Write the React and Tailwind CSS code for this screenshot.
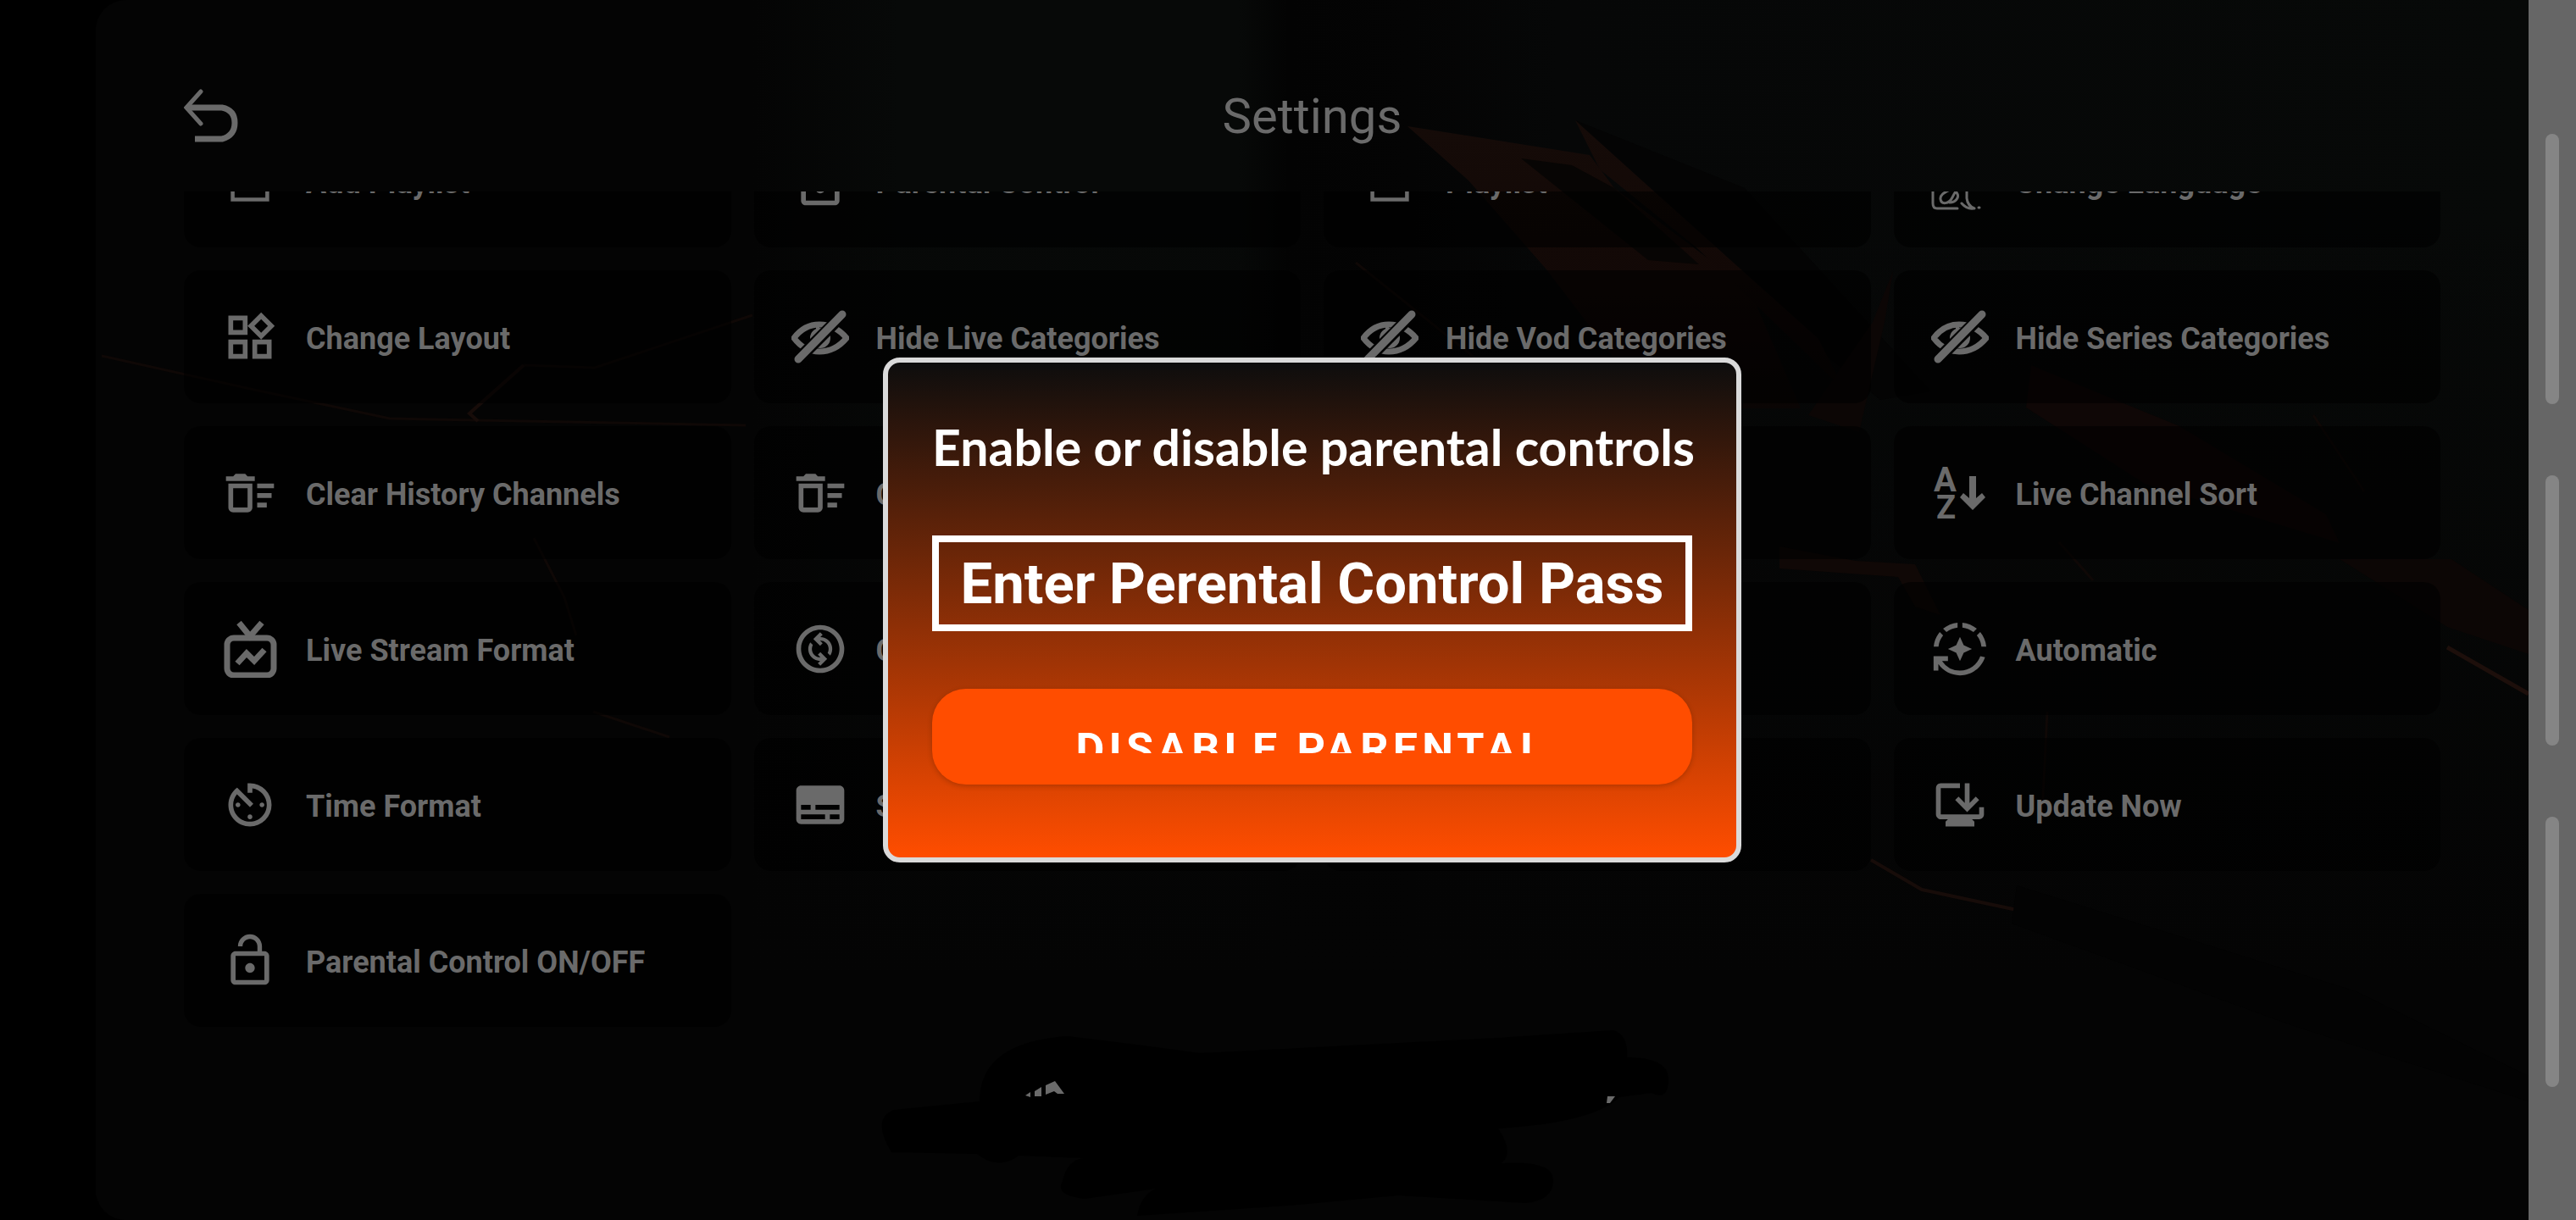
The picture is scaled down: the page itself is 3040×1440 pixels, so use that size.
import React from 'react';
import {
  MdOutlineWidgets,
  MdOutlineDeleteSweep,
  MdOutlineChangeCircle,
  MdSubtitles,
  MdAvTimer,
  MdLockOpen,
  MdLockOutline,
  MdAutoMode,
  MdOutlineBrowserUpdated,
} from 'react-icons/md';

const PlaylistIcon = () => (
  <svg viewBox="0 0 24 24" className="size-full" fill="none" stroke="currentColor" strokeWidth="1.6">
    <path d="M4.8 4.8h14.4v14.8H4.8z" />
    <path d="M12 8v8M8 12h8" />
  </svg>
);

const LanguageIcon = () => (
  <svg viewBox="0 0 68 68" className="size-full" fill="none" stroke="currentColor" strokeWidth="3" strokeLinecap="round">
    <path d="M2 8v52q0 6 5 6h24M42 34v20q1 9 9 12M36 60q6 7 14 6M56 65h1" />
    <path d="M29 40C20 46 10 48 11 55s10 6 14-2 4-8 6-4-2 10-9 10" />
  </svg>
);

const EyeOffIcon = () => (
  <svg viewBox="0 0 68 68" className="size-full" fill="none" stroke="currentColor">
    <path d="M3 35C12 23 22 19 33 19s22 4 32 16C55 47 44 51 33 51S12 47 3 35z" strokeWidth="7" />
    <circle cx="34" cy="35" r="9" strokeWidth="6" />
    <path d="M31 22v9" strokeWidth="4" />
    <path d="M8 60L61 7" stroke="#020202" strokeWidth="14" />
    <path d="M8 60L60 7" strokeWidth="9" strokeLinecap="round" />
  </svg>
);

const TvIcon = () => (
  <svg viewBox="0 0 68 68" className="size-full" fill="none" stroke="currentColor" strokeWidth="7">
    <rect x="7" y="21" width="55" height="44" rx="8" />
    <path d="M21 3l13 16L48 3" />
    <path d="M19 51l11-12 9 9 12-13" />
  </svg>
);

const SortIcon = () => (
  <svg viewBox="0 0 68 68" className="size-full" fill="currentColor" fontFamily="Roboto, sans-serif" fontWeight="700">
    <text x="3" y="32" fontSize="40">A</text>
    <text x="6" y="64" fontSize="38">Z</text>
    <path d="M45 14h8v26l7-6 4 5-15 15-15-15 4-5 7 6z" />
  </svg>
);

const menuItems = [
  { icon: PlaylistIcon, label: 'Add Playlist' },
  { icon: MdLockOutline, label: 'Parental Control' },
  { icon: PlaylistIcon, label: 'Playlist' },
  { icon: LanguageIcon, label: 'Change Language' },
  { icon: MdOutlineWidgets, label: 'Change Layout' },
  { icon: EyeOffIcon, label: 'Hide Live Categories' },
  { icon: EyeOffIcon, label: 'Hide Vod Categories' },
  { icon: EyeOffIcon, label: 'Hide Series Categories' },
  { icon: MdOutlineDeleteSweep, label: 'Clear History Channels' },
  { icon: MdOutlineDeleteSweep, label: 'Clear History Movies' },
  { icon: MdOutlineDeleteSweep, label: 'Clear History Series' },
  { icon: SortIcon, label: 'Live Channel Sort' },
  { icon: TvIcon, label: 'Live Stream Format' },
  { icon: MdOutlineChangeCircle, label: 'Change Player' },
  { icon: MdOutlineChangeCircle, label: 'Player Type' },
  { icon: MdAutoMode, label: 'Automatic' },
  { icon: MdAvTimer, label: 'Time Format' },
  { icon: MdSubtitles, label: 'Subtitle Size' },
  { icon: MdSubtitles, label: 'User Account' },
  { icon: MdOutlineBrowserUpdated, label: 'Update Now' },
  { icon: MdLockOpen, label: 'Parental Control ON/OFF' },
];

// Faint cracked-rock wallpaper behind the settings grid
const Wallpaper = () => (
  <svg className="absolute inset-0 size-full" viewBox="113 0 2871 1440" preserveAspectRatio="none" aria-hidden="true">
    <defs>
      <linearGradient id="base" x1="0" y1="0" x2="1" y2="0">
        <stop offset="0" stopColor="#040404" />
        <stop offset="0.27" stopColor="#040404" />
        <stop offset="0.33" stopColor="#070908" />
        <stop offset="0.47" stopColor="#070908" />
        <stop offset="0.49" stopColor="#030303" />
        <stop offset="0.54" stopColor="#040404" />
        <stop offset="0.6" stopColor="#060707" />
        <stop offset="1" stopColor="#070908" />
      </linearGradient>
      <linearGradient id="floor" x1="0" y1="0" x2="0" y2="1">
        <stop offset="0.15" stopColor="#040404" stopOpacity="0" />
        <stop offset="0.8" stopColor="#040404" />
      </linearGradient>
      <linearGradient id="shard" x1="0" y1="0" x2="0" y2="1">
        <stop offset="0" stopColor="#150b08" />
        <stop offset="0.6" stopColor="#120806" />
        <stop offset="1" stopColor="#0a0504" />
      </linearGradient>
    </defs>
    <rect x="113" width="2871" height="1440" fill="url(#base)" />
    <rect x="113" width="2871" height="1440" fill="url(#floor)" />
    <path d="M1859 142l200 80 220 240-60 10-220-180z" fill="#040404" />
    <path d="M1661 149l215 34 29 39 160 120 60 140H1950L1825 318l-92-105z" fill="url(#shard)" />
    <path d="M1795 187l60 8 50 27 100 90-60-5z" fill="#070504" />
    <path d="M1859 142l92 83 195 175 30 60-173-167-115-93z" fill="url(#shard)" />
    <path d="M2397 431l-6 50 140 90 230 70-16-34-173-104z" fill="#0f0706" />
    <path d="M2210 380l24-60-10 60-30 130-60-20z" fill="#0c0605" />
    <path d="M2100 645l90 17 70 4 30 60-30-10-20-35-140-10z" fill="#100806" />
    <path d="M2761 660h132l91 60v52l-96-32z" fill="#0c0605" />
    <path d="M2888 764l96 55" stroke="#1d0f0b" strokeWidth="5" />
    <g fill="none" stroke="#0f0806" strokeWidth="3">
      <path d="M888 372L702 434l-84-3" />
      <path d="M120 420l180 40 160 34 420 8" />
      <path d="M630 635l36 70 14 45M700 840l90 30" />
      <path d="M2410 960l6-120M2430 640l40 45" />
      <path d="M1600 310l200 160M2730 490l60 90" />
    </g>
    <g fill="none" stroke="#170c09" strokeWidth="4">
      <path d="M618 431l-64 57 10 9" />
      <path d="M2208 1015l60 35 140 30 112 13 4 29 166 50" />
    </g>
    <path d="M2380 1045l400 125 204 100v30l-280-90-330-120z" fill="#030303" />
    <path
      d="M1156 1300q0-70 104-77 70 8 156 20l352-18 136-9q18 6 16 32 49 0 49 26t-20 16l-38 5q-30 30-143 37 20 30 3 41 62-4 62 20t-33 27l-150-9-130 12-178 12q4-24 22-32l-84 12q-36-4-26-21 6-26 26-27l-78-3q-24 18-49-2l-101-2q-24-40 3-50z"
      fill="#000000"
    />
    <path
      d="M1210 1293l6-4v6zM1221 1288l8-5v11h-8zM1234 1281l11-5 11 15h-8l-4-3-10 4zM1897 1294h9l-6 8h-4z"
      fill="#6a6a6a"
    />
  </svg>
);

const SettingTile = ({ icon: Icon, label }) => (
  <button className="flex items-center gap-8 h-[157px] pl-11 rounded-[20px] bg-black/60 text-left">
    <span className="size-[68px] shrink-0"><Icon className="size-full" /></span>
    <span className="pt-1 text-[36px] leading-[44px] font-bold whitespace-nowrap">{label}</span>
  </button>
);

const ParentalDialog = () => (
  <div role="dialog" aria-labelledby="dialog-title" className="w-[1013px] rounded-[20px] border-6 border-[#dadada] bg-linear-to-b/srgb from-[#0d0d0d] to-[#ff4d00] px-[52px] pt-16 pb-[86px] text-white">
    <h2 id="dialog-title" className="text-center text-[59px] leading-[72px] font-bold whitespace-nowrap" style={{ fontFamily: 'Lato, sans-serif' }}>
      Enable or disable parental controls
    </h2>
    <input
      type="text"
      aria-label="Parental control password"
      placeholder="Enter Perental Control Pass"
      className="mt-[68px] block h-[113px] w-full border-8 border-white px-4 text-center text-[67px] font-bold placeholder:text-white outline-none"
    />
    <button className="mt-[68px] flex h-[113px] w-full justify-center rounded-[40px] bg-[#ff4d00] pt-11 shadow-[0_2px_6px_rgba(0,0,0,0.2)]">
      <span className="block h-8 overflow-hidden text-[52px] leading-[56px] font-bold tracking-widest">DISABLE PARENTAL</span>
    </button>
  </div>
);

export default function App() {
  return (
    <div className="flex h-screen overflow-hidden bg-black text-[#6a6a6a]" style={{ fontFamily: 'Roboto, sans-serif' }}>
      <div className="w-[113px] shrink-0" />

      <main className="relative flex-1 min-w-0 overflow-hidden rounded-l-[36px]">
        <Wallpaper />
        <div className="relative flex h-full flex-col px-[104px]">
          <header className="grid h-[226px] shrink-0 grid-cols-3 items-start pt-[101px]">
            <button aria-label="Back" className="size-[68px]">
              <svg viewBox="0 0 68 68" className="size-full" fill="none" stroke="currentColor">
                <path d="M6 26h39q15 3 15 18t-15 19H13" strokeWidth="7" />
                <path d="M20 7L3 26l17 19" strokeWidth="5" strokeLinecap="round" />
              </svg>
            </button>
            <h1 className="text-center text-[58px] leading-[72px] font-normal">Settings</h1>
          </header>
          <div className="min-h-0 flex-1 overflow-hidden">
            <div className="-mt-[91px] grid grid-cols-4 gap-[27px]">
              {menuItems.map((item) => (
                <SettingTile key={item.label} icon={item.icon} label={item.label} />
              ))}
            </div>
          </div>
        </div>

        <div className="absolute inset-0 flex items-center justify-center">
          <ParentalDialog />
        </div>
      </main>

      <aside className="flex w-14 shrink-0 flex-col items-center gap-[84px] bg-[#666666] pt-[158px]">
        <div className="h-[319px] w-4 rounded-full bg-[#858585]" />
        <div className="h-[319px] w-4 rounded-full bg-[#858585]" />
        <div className="h-[319px] w-4 rounded-full bg-[#858585]" />
      </aside>
    </div>
  );
}
